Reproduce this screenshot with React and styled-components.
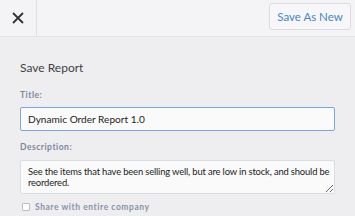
import React from 'react';
import styled, { createGlobalStyle } from 'styled-components';

const GlobalStyle = createGlobalStyle`
  html, body {
    margin: 0;
    padding: 0;
    background: #eeeef1;
  }
  body {
    font-family: Lato, "Open Sans", sans-serif;
  }
`;

const Page = styled.div`
  width: 355px;
  height: 216px;
  overflow: hidden;
  background: #eeeef1;
`;

const Header = styled.div`
  display: flex;
  align-items: stretch;
  height: 36px;
  background: #f4f4f6;
  border-bottom: 1px solid #e3e3e7;
`;

const CloseButton = styled.button`
  width: 37px;
  display: flex;
  align-items: center;
  justify-content: center;
  padding: 0;
  border: none;
  border-right: 1px solid #e0e0e4;
  background: transparent;
  color: #333;
`;

const HeaderSpacer = styled.div`
  flex: 1;
`;

const SaveAsNew = styled.button`
  align-self: flex-start;
  margin: 3px 4px 0 0;
  height: 27px;
  width: 82px;
  padding: 0;
  border: 1px solid #dcdce1;
  border-radius: 3px;
  background: #f7f7f9;
  color: #4a84c4;
  font-family: Lato, sans-serif;
  font-size: 11.5px;
`;

const Body = styled.div`
  padding: 23px 20px 0 20px;
`;

const Title = styled.h2`
  margin: 0 0 13px 0;
  font-size: 12px;
  font-weight: 400;
  color: #3f3f44;
  line-height: 16px;
`;

const Label = styled.label`
  display: block;
  margin-bottom: ${(p) => p.gap || 6}px;
  font-size: 8.5px;
  font-weight: 700;
  letter-spacing: 0.5px;
  color: #7d869a;
  line-height: 12px;
`;

const TextInput = styled.input`
  box-sizing: border-box;
  display: block;
  width: 315px;
  height: 24px;
  margin: 0 0 10px 0;
  padding: 0 7px;
  border: 1px solid #7aa8dc;
  border-radius: 2px;
  background: #fafafa;
  color: #222;
  font-family: Lato, sans-serif;
  font-size: 10.1px;
  outline: none;
`;

const TextArea = styled.textarea`
  box-sizing: border-box;
  display: block;
  width: 315px;
  height: 34px;
  margin: 0;
  padding: 6px 1px 6px 7px;
  border: 1px solid #d9dde3;
  border-radius: 2px;
  background: #fafafa;
  color: #222;
  font-family: Lato, sans-serif;
  font-size: 9.4px;
  letter-spacing: -0.15px;
  line-height: 10.5px;
  resize: vertical;
  overflow: hidden;
`;

const CheckRow = styled.label`
  display: flex;
  align-items: center;
  gap: 5px;
  margin-top: 8px;
  padding-left: 2px;
  font-size: 8.5px;
  font-weight: 700;
  letter-spacing: 0.55px;
  color: #8a93a6;
`;

const Box = styled.span`
  box-sizing: border-box;
  width: 8px;
  height: 8px;
  border: 1px solid #b8bcc6;
  border-radius: 1px;
  background: #fff;
`;

export default function App() {
  return (
    <Page>
      <GlobalStyle />
      <Header>
        <CloseButton aria-label="Close">
          <svg width="12" height="12" viewBox="0 0 12 12">
            <path d="M1 1L11 11M11 1L1 11" stroke="#333" strokeWidth="1.8" fill="none" />
          </svg>
        </CloseButton>
        <HeaderSpacer />
        <SaveAsNew>Save As New</SaveAsNew>
      </Header>
      <Body>
        <Title>Save Report</Title>
        <Label>Title:</Label>
        <TextInput defaultValue="Dynamic Order Report 1.0" />
        <Label gap={7}>Description:</Label>
        <TextArea defaultValue="See the items that have been selling well, but are low in stock, and should be reordered." />
        <CheckRow>
          <Box />
          Share with entire company
        </CheckRow>
      </Body>
    </Page>
  );
}
